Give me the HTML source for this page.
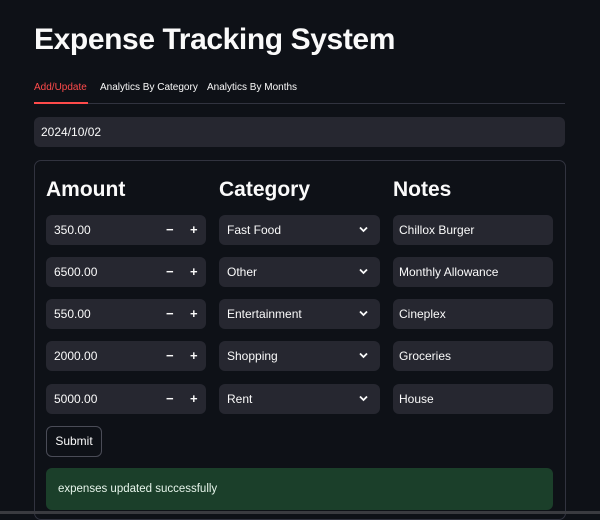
<!DOCTYPE html>
<html><head><style>
*{box-sizing:border-box;margin:0;padding:0}
body{width:600px;height:514px;background:#0e1117;color:#fafafa;font-family:"Liberation Sans",sans-serif;position:relative;overflow:hidden}
.a{position:absolute}
h1{position:absolute;left:34px;top:23px;font-size:30px;font-weight:bold;letter-spacing:-0.4px}
.tab{position:absolute;top:82px;font-size:10px;color:#fafafa}
.in{position:absolute;background:#262730;border-radius:6px;height:30px;font-size:12px;line-height:30px;padding-left:8px}
.h{position:absolute;top:178px;font-size:21px;font-weight:bold}
.pm{position:absolute;top:0;font-size:13px;font-weight:bold}
.chev{position:absolute;right:12px;top:11px}
</style></head><body>
<h1>Expense Tracking System</h1>
<div class="tab" style="left:34px;color:#ff4b4b">Add/Update</div>
<div class="tab" style="left:100px">Analytics By Category</div>
<div class="tab" style="left:207px">Analytics By Months</div>
<div class="a" style="left:34px;top:103px;width:531px;height:1px;background:#31333f"></div>
<div class="a" style="left:34px;top:102px;width:54px;height:2px;background:#ff4b4b"></div>
<div class="in" style="left:34px;top:117px;width:531px;padding-left:7px">2024/10/02</div>
<div class="a" style="left:34px;top:160px;width:532px;height:360px;border:1px solid #31333f;border-radius:7px"></div>
<div class="h" style="left:46px">Amount</div>
<div class="h" style="left:219px">Category</div>
<div class="h" style="left:393px">Notes</div>

<div class="in" style="left:46px;top:215px;width:160px">350.00<span class="pm" style="left:120px">−</span><span class="pm" style="left:144px">+</span></div>
<div class="in" style="left:46px;top:257px;width:160px">6500.00<span class="pm" style="left:120px">−</span><span class="pm" style="left:144px">+</span></div>
<div class="in" style="left:46px;top:299px;width:160px">550.00<span class="pm" style="left:120px">−</span><span class="pm" style="left:144px">+</span></div>
<div class="in" style="left:46px;top:341px;width:160px">2000.00<span class="pm" style="left:120px">−</span><span class="pm" style="left:144px">+</span></div>
<div class="in" style="left:46px;top:384px;width:160px">5000.00<span class="pm" style="left:120px">−</span><span class="pm" style="left:144px">+</span></div>

<div class="in" style="left:219px;top:215px;width:161px">Fast Food<svg class="chev" width="9" height="7" viewBox="0 0 9 7"><path d="M1 1.5L4.5 5L8 1.5" stroke="#fafafa" stroke-width="1.8" fill="none"/></svg></div>
<div class="in" style="left:219px;top:257px;width:161px">Other<svg class="chev" width="9" height="7" viewBox="0 0 9 7"><path d="M1 1.5L4.5 5L8 1.5" stroke="#fafafa" stroke-width="1.8" fill="none"/></svg></div>
<div class="in" style="left:219px;top:299px;width:161px">Entertainment<svg class="chev" width="9" height="7" viewBox="0 0 9 7"><path d="M1 1.5L4.5 5L8 1.5" stroke="#fafafa" stroke-width="1.8" fill="none"/></svg></div>
<div class="in" style="left:219px;top:341px;width:161px">Shopping<svg class="chev" width="9" height="7" viewBox="0 0 9 7"><path d="M1 1.5L4.5 5L8 1.5" stroke="#fafafa" stroke-width="1.8" fill="none"/></svg></div>
<div class="in" style="left:219px;top:384px;width:161px">Rent<svg class="chev" width="9" height="7" viewBox="0 0 9 7"><path d="M1 1.5L4.5 5L8 1.5" stroke="#fafafa" stroke-width="1.8" fill="none"/></svg></div>

<div class="in" style="left:393px;top:215px;width:160px;padding-left:6px">Chillox Burger</div>
<div class="in" style="left:393px;top:257px;width:160px;padding-left:6px">Monthly Allowance</div>
<div class="in" style="left:393px;top:299px;width:160px;padding-left:6px">Cineplex</div>
<div class="in" style="left:393px;top:341px;width:160px;padding-left:6px">Groceries</div>
<div class="in" style="left:393px;top:384px;width:160px;padding-left:6px">House</div>

<div class="a" style="left:46px;top:426px;width:56px;height:31px;border:1px solid #4a4c57;border-radius:6px;font-size:12px;line-height:29px;text-align:center">Submit</div>
<div class="a" style="left:46px;top:468px;width:507px;height:42px;background:#1b3f2a;border-radius:6px;font-size:11.5px;line-height:42px;padding-left:12px;color:#e6f4ea">expenses updated successfully</div>
<div class="a" style="left:0;top:511px;width:600px;height:3px;background:#3a3b40"></div>
</body></html>
